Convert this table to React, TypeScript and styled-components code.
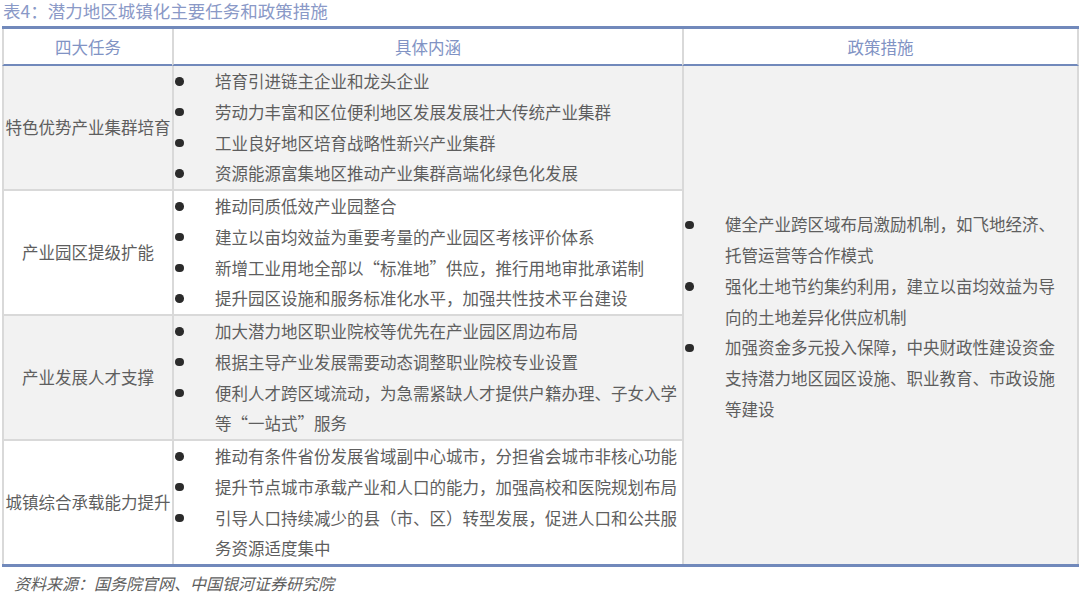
import React from "react";
import styled, { createGlobalStyle } from "styled-components";

const GlobalStyle = createGlobalStyle`
  html, body {
    margin: 0;
    padding: 0;
    background: #ffffff;
  }
  body {
    font-family: "Noto Sans CJK SC", "Noto Sans", sans-serif;
  }
`;

const Page = styled.div`
  width: 1080px;
  height: 597px;
  overflow: hidden;
  background: #ffffff;
`;

const Title = styled.div`
  padding-left: 3px;
  font-size: 17.5px;
  line-height: 22px;
  color: #8a99c7;
  height: 26px;
  white-space: nowrap;
`;

const Table = styled.div`
  margin-left: 2px;
  width: 1077px;
  display: grid;
  grid-template-columns: 170px 510px 1fr;
  grid-template-rows: 37px repeat(4, auto);
  border-top: 3px solid #7189bb;
  border-bottom: 3px solid #7189bb;
`;

const HeadCell = styled.div<{ $last?: boolean }>`
  display: flex;
  align-items: center;
  justify-content: center;
  border-left: 2px solid #d9d9d9;
  border-right: ${(p) => (p.$last ? "2px solid #d9d9d9" : "none")};
  border-bottom: 2px solid #7189bb;
  color: #8193c4;
  font-size: 16.5px;
  line-height: 20px;
  background: #ffffff;
`;

const LabelCell = styled.div<{ $shade: boolean; $lastRow: boolean }>`
  display: flex;
  align-items: center;
  justify-content: center;
  border-left: 2px solid #d9d9d9;
  border-bottom: ${(p) => (p.$lastRow ? "none" : "2px solid #d9d9d9")};
  background: ${(p) => (p.$shade ? "#f2f2f2" : "#ffffff")};
  color: #5e5e5e;
  font-size: 16.5px;
  line-height: 30.75px;
  white-space: nowrap;
`;

const TaskCell = styled.div<{ $shade: boolean; $lastRow: boolean }>`
  display: flex;
  flex-direction: column;
  justify-content: center;
  border-left: 2px solid #d9d9d9;
  border-bottom: ${(p) => (p.$lastRow ? "none" : "2px solid #d9d9d9")};
  background: ${(p) => (p.$shade ? "#f2f2f2" : "#ffffff")};
  min-height: 123px;
`;

const PolicyCell = styled.div`
  grid-column: 3;
  grid-row: 2 / span 4;
  display: flex;
  flex-direction: column;
  justify-content: center;
  border-left: 2px solid #d9d9d9;
  border-right: 2px solid #d9d9d9;
  background: #f2f2f2;
  padding-top: 4px;
`;

const Item = styled.div<{ $textWidth: number }>`
  display: grid;
  grid-template-columns: 41px ${(p) => p.$textWidth}px;
  color: #5e5e5e;
  font-size: 16.5px;
  line-height: 30.75px;
`;

const BulletSlot = styled.span`
  height: 30.75px;
  display: flex;
  align-items: center;
  padding-left: 1px;
`;

const Dot = styled.span`
  width: 8.5px;
  height: 8.5px;
  border-radius: 50%;
  background: #2b2b2b;
`;

const ItemText = styled.span`
  line-break: strict;
`;

const Source = styled.div`
  margin-top: 6px;
  padding-left: 14px;
  font-size: 16px;
  line-height: 20px;
  font-style: italic;
  color: #5e5e5e;
`;

type Row = { label: string; items: string[] };

const rows: Row[] = [
  {
    label: "特色优势产业集群培育",
    items: [
      "培育引进链主企业和龙头企业",
      "劳动力丰富和区位便利地区发展发展壮大传统产业集群",
      "工业良好地区培育战略性新兴产业集群",
      "资源能源富集地区推动产业集群高端化绿色化发展",
    ],
  },
  {
    label: "产业园区提级扩能",
    items: [
      "推动同质低效产业园整合",
      "建立以亩均效益为重要考量的产业园区考核评价体系",
      "新增工业用地全部以“标准地”供应，推行用地审批承诺制",
      "提升园区设施和服务标准化水平，加强共性技术平台建设",
    ],
  },
  {
    label: "产业发展人才支撑",
    items: [
      "加大潜力地区职业院校等优先在产业园区周边布局",
      "根据主导产业发展需要动态调整职业院校专业设置",
      "便利人才跨区域流动，为急需紧缺人才提供户籍办理、子女入学等“一站式”服务",
    ],
  },
  {
    label: "城镇综合承载能力提升",
    items: [
      "推动有条件省份发展省域副中心城市，分担省会城市非核心功能",
      "提升节点城市承载产业和人口的能力，加强高校和医院规划布局",
      "引导人口持续减少的县（市、区）转型发展，促进人口和公共服务资源适度集中",
    ],
  },
];

const policies = [
  "健全产业跨区域布局激励机制，如飞地经济、托管运营等合作模式",
  "强化土地节约集约利用，建立以亩均效益为导向的土地差异化供应机制",
  "加强资金多元投入保障，中央财政性建设资金支持潜力地区园区设施、职业教育、市政设施等建设",
];

const Bullet: React.FC<{ text: string; width: number }> = ({ text, width }) => (
  <Item $textWidth={width}>
    <BulletSlot>
      <Dot />
    </BulletSlot>
    <ItemText>{text}</ItemText>
  </Item>
);

export default function App() {
  return (
    <Page>
      <GlobalStyle />
      <Title>表4：潜力地区城镇化主要任务和政策措施</Title>
      <Table>
        <HeadCell>四大任务</HeadCell>
        <HeadCell>具体内涵</HeadCell>
        <HeadCell $last>政策措施</HeadCell>
        {rows.map((r, i) => (
          <React.Fragment key={r.label}>
            <LabelCell $shade={i % 2 === 0} $lastRow={i === rows.length - 1}>
              {r.label}
            </LabelCell>
            <TaskCell $shade={i % 2 === 0} $lastRow={i === rows.length - 1}>
              {r.items.map((t) => (
                <Bullet key={t} text={t} width={463} />
              ))}
            </TaskCell>
          </React.Fragment>
        ))}
        <PolicyCell>
          {policies.map((t) => (
            <Bullet key={t} text={t} width={331} />
          ))}
        </PolicyCell>
      </Table>
      <Source>资料来源：国务院官网、中国银河证券研究院</Source>
    </Page>
  );
}
